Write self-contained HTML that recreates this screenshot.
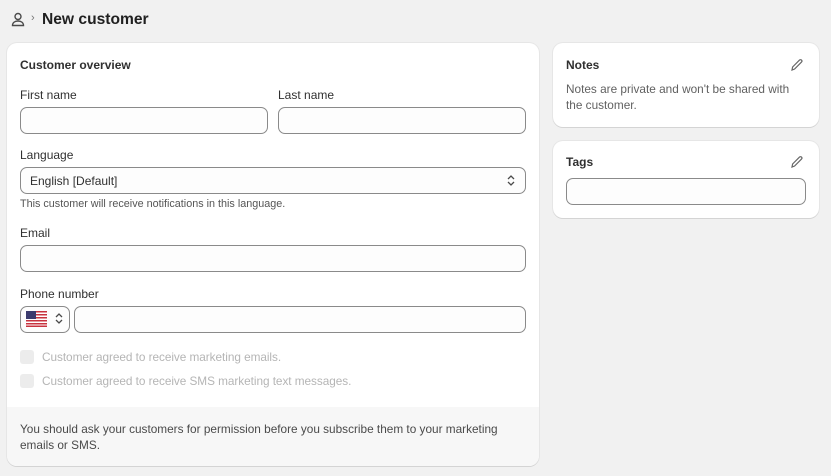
<!DOCTYPE html>
<html><head><style>
*{box-sizing:border-box;margin:0;padding:0}
body{width:831px;height:476px;background:#f1f1f1;font-family:"Liberation Sans",sans-serif;color:#303030;position:relative;overflow:hidden;font-size:12px}
.a{position:absolute}
.card{position:absolute;background:#fff;border-radius:10px;box-shadow:0 1px 0 #d4d4d4,0 0 0 1px #e6e6e6}
.lbl{position:absolute;font-size:12px;color:#303030;line-height:14px}
.inp{position:absolute;border:1px solid #8a8a8a;border-radius:7px;background:#fdfdfd;height:27px}
.h{font-weight:bold;font-size:12px}
.dis{position:absolute;color:#b5b5b5;font-size:11.8px;line-height:14px;letter-spacing:-0.05px}
.cb{position:absolute;width:14px;height:14px;border-radius:3px;background:#ececec}
</style></head><body>
<svg class="a" style="left:11px;top:12px" width="14" height="15" viewBox="0 0 14 15" fill="none" stroke="#4a4a4a" stroke-width="1.4"><circle cx="7" cy="4.5" r="3"/><path d="M1.5 13.5c0-3 2.5-4.5 5.5-4.5s5.5 1.5 5.5 4.5z"/></svg>
<div class="a" style="left:31px;top:12px;font-size:11px;color:#777">›</div>
<div class="a" style="left:42px;top:11px;font-size:15.6px;font-weight:bold;color:#202020">New customer</div>

<div class="card" style="left:7px;top:43px;width:532px;height:423px;overflow:hidden">
<div class="a" style="left:0;top:364px;width:532px;height:59px;background:#f7f7f7"></div>
</div>
<div class="lbl h" style="left:20px;top:58px">Customer overview</div>
<div class="lbl" style="left:20px;top:88px">First name</div>
<div class="lbl" style="left:278px;top:88px">Last name</div>
<div class="inp" style="left:20px;top:107px;width:248px"></div>
<div class="inp" style="left:278px;top:107px;width:248px"></div>
<div class="lbl" style="left:20px;top:148px">Language</div>
<div class="inp" style="left:20px;top:167px;width:506px"></div>
<div class="lbl" style="left:30px;top:174px">English [Default]</div>
<svg class="a" style="left:506px;top:174px" width="10" height="13" viewBox="0 0 10 13" fill="none" stroke="#4a4a4a" stroke-width="1.3"><path d="M2 5l3-3 3 3M2 8l3 3 3-3"/></svg>
<div class="a" style="left:20px;top:198px;font-size:10.8px;color:#555">This customer will receive notifications in this language.</div>
<div class="lbl" style="left:20px;top:226px">Email</div>
<div class="inp" style="left:20px;top:245px;width:506px"></div>
<div class="lbl" style="left:20px;top:287px">Phone number</div>
<div class="inp" style="left:20px;top:306px;width:50px"></div>
<svg class="a" style="left:26px;top:311px" width="21" height="16" viewBox="0 0 21 16"><rect width="21" height="16" fill="#fff"/><g fill="#c8333f"><rect y="0" width="21" height="1.5"/><rect y="3" width="21" height="1.5"/><rect y="6" width="21" height="1.5"/><rect y="9" width="21" height="1.5"/><rect y="12" width="21" height="1.5"/><rect y="14.5" width="21" height="1.5"/></g><rect width="10" height="8" fill="#3c3b6e"/></svg>
<svg class="a" style="left:54px;top:312px" width="10" height="13" viewBox="0 0 10 13" fill="none" stroke="#4a4a4a" stroke-width="1.3"><path d="M2 5l3-3 3 3M2 8l3 3 3-3"/></svg>
<div class="inp" style="left:74px;top:306px;width:452px"></div>
<div class="cb" style="left:20px;top:350px"></div>
<div class="dis" style="left:42px;top:350px">Customer agreed to receive marketing emails.</div>
<div class="cb" style="left:20px;top:374px"></div>
<div class="dis" style="left:42px;top:374px">Customer agreed to receive SMS marketing text messages.</div>
<div class="a" style="left:20px;top:421px;width:500px;line-height:16px;color:#4a4a4a;font-size:11.8px">You should ask your customers for permission before you subscribe them to your marketing emails or SMS.</div>

<div class="card" style="left:553px;top:43px;width:266px;height:84px"></div>
<div class="lbl h" style="left:566px;top:58px">Notes</div>
<svg class="a" style="left:790px;top:58px" width="14" height="14" viewBox="0 0 14 14" fill="none" stroke="#666" stroke-width="1.2"><path d="M2 12l.6-3L9.5 2.1a1.4 1.4 0 012 2L4.6 11z"/></svg>
<div class="a" style="left:566px;top:81px;width:240px;line-height:16px;color:#616161;font-size:11.8px">Notes are private and won't be shared with the customer.</div>

<div class="card" style="left:553px;top:141px;width:266px;height:77px"></div>
<div class="lbl h" style="left:566px;top:155px">Tags</div>
<svg class="a" style="left:790px;top:155px" width="14" height="14" viewBox="0 0 14 14" fill="none" stroke="#666" stroke-width="1.2"><path d="M2 12l.6-3L9.5 2.1a1.4 1.4 0 012 2L4.6 11z"/></svg>
<div class="inp" style="left:566px;top:178px;width:240px"></div>
</body></html>
